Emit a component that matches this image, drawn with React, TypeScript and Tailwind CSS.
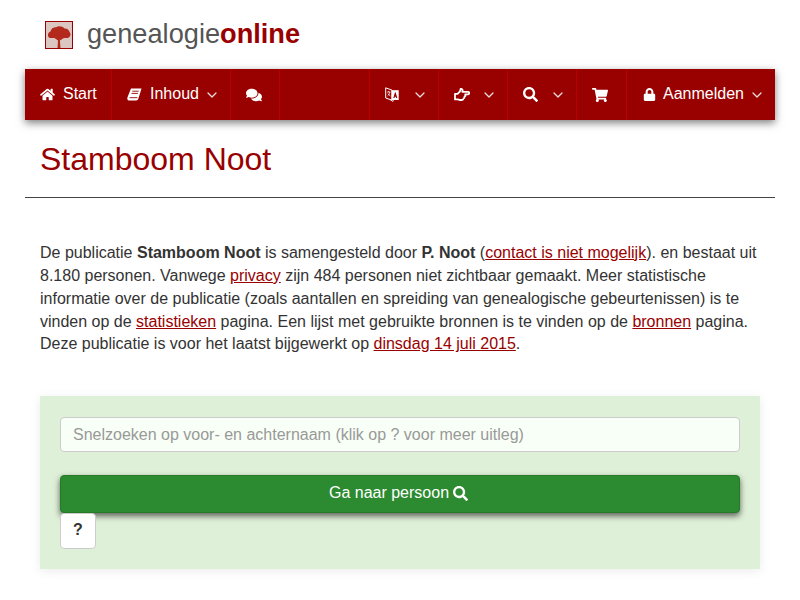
import { ReactNode } from 'react';
import { ChevronDown } from 'lucide-react';
import { FaHome, FaComments, FaSearch, FaShoppingCart, FaLock } from 'react-icons/fa';

function NavItem({ className, children, chevron }: { className: string; children: ReactNode; chevron?: boolean }) {
  return (
    <div className={`flex h-full items-center border-r border-[#b80000] pl-[15px] text-white ${className}`}>
      {children}
      {chevron && <ChevronDown size={16} strokeWidth={1.9} className="ml-auto mr-[10px] text-[#f5dede]" />}
    </div>
  );
}

function RedLink({ children }: { children: ReactNode }) {
  return <a className="text-[#990000] underline">{children}</a>;
}

// FA4 style icons, the icon packages only have the newer shapes
function BookIcon() {
  return (
    <svg viewBox="0 0 15 13" className="h-[13px] w-[15px]">
      <path d="M4 .5h10.500L11.300 10.800c-.3.9-.9 1.700-2.100 1.700H2.300C.7 12.500-.1 11 .5 9.300z" fill="white" />
      <path d="M5.300 3.200h6.400M4.500 5.400h6.400M2.600 9.700h7.800" stroke="#990000" strokeWidth="0.9" fill="none" />
    </svg>
  );
}

function LanguageIcon() {
  return (
    <svg viewBox="0 0 14 15" className="h-[15px] w-[14px]">
      <path d="M.7.8l6.300 2.400v10L.7 11z" fill="#990000" stroke="white" strokeWidth="1" />
      <path d="M6.500 3.200h7.200v9.800H6.500z" fill="white" />
      <path d="M8.300 11l1.700-5.800h.6L12.300 11h-1.200l-.3-1.300H9.800L9.500 11z" fill="#990000" />
      <path d="M2 5h3.500M3.700 4v1M2.500 9C4 8 4.500 6.500 4.800 5M3 6.500c.5 1 1.300 2 2.500 2.500" stroke="white" strokeWidth="0.7" fill="none" />
      <path d="M5 12.500l3 2 .3-1.500" stroke="white" strokeWidth="0.8" fill="none" />
    </svg>
  );
}

function HandIcon() {
  return (
    <svg viewBox="0 0 16 13" className="h-[13px] w-[16px]">
      <path
        d="M1 5.800h2.600L6 3.300 6.700.8c1.700 0 2.300 1.500 1.600 3h5.700c1.600 0 1.600 2.600 0 2.600h-2.800c.4 1 0 2-.7 2.300.1 1-.4 1.600-1 1.800-.1 1-.8 1.500-1.800 1.500H6c-1 0-1.500-.6-2.400-.6H1z"
        fill="none"
        stroke="white"
        strokeWidth="1.800"
        strokeLinejoin="round"
      />
    </svg>
  );
}

export default function App() {
  return (
    <div className="h-[600px] overflow-hidden bg-white font-['Liberation_Sans',Arial,sans-serif] text-[16px] leading-[22.85px] text-[#333333]">
      <div className="mx-auto w-[750px]">
        {/* Logo */}
        <div className="flex h-[69px] items-center pl-[20px]">
          <div className="flex h-[28px] w-[28px] items-end justify-center border border-[#990000] bg-[#dcc6c2]">
            <svg viewBox="0 0 26 26" className="h-[26px] w-[26px]">
              <path
                d="M11.500 26h3l-.6-7.500 4-2.500h3.600c3-.6 4-4 2-6-.6-2.800-3-4-5-3.500C16.500 4 12.500 3.300 10 5.300 6.500 5.300 5 7.500 4.500 9.500 1.500 10.500 1 15 4 16h4.500l3.500 2.500z"
                fill="#b32a1c"
              />
            </svg>
          </div>
          <div className="ml-[14px] pb-[2px] text-[27.2px] leading-none text-[#555555]">
            genealogie<span className="font-bold text-[#990000]">online</span>
          </div>
        </div>

        {/* Nav */}
        <nav className="flex h-[51px] items-center bg-[#990000] shadow-[0_3px_8px_rgba(0,0,0,0.5)]">
          <NavItem className="w-[87px]">
            <FaHome size={15} />
            <span className="ml-[8px]">Start</span>
          </NavItem>
          <NavItem className="w-[119px]" chevron>
            <BookIcon />
            <span className="ml-[8px]">Inhoud</span>
          </NavItem>
          <NavItem className="w-[49px]">
            <FaComments size={16} />
          </NavItem>
          <div className="h-full w-[90px] border-r border-[#b80000]" />
          <NavItem className="w-[69px]" chevron>
            <LanguageIcon />
          </NavItem>
          <NavItem className="w-[69px]" chevron>
            <HandIcon />
          </NavItem>
          <NavItem className="w-[69px]" chevron>
            <FaSearch size={15} />
          </NavItem>
          <NavItem className="w-[50px]">
            <FaShoppingCart size={16} />
          </NavItem>
          <NavItem className="flex-1 border-r-0" chevron>
            <FaLock size={13} className="ml-[1px]" />
            <span className="ml-[7px]">Aanmelden</span>
          </NavItem>
        </nav>

        {/* Title */}
        <div className="h-[78px] border-b border-[#444444] px-[15px]">
          <h1 className="pt-[21px] text-[32px] leading-[36px] text-[#990000]">Stamboom Noot</h1>
        </div>

        {/* Intro */}
        <p className="px-[15px] pt-[44px]">
          De publicatie <b>Stamboom Noot</b> is samengesteld door <b>P. Noot</b> (<RedLink>contact is niet mogelijk</RedLink>). en bestaat uit 8.180 personen. Vanwege <RedLink>privacy</RedLink> zijn 484 personen niet zichtbaar gemaakt. Meer statistische informatie over de publicatie (zoals aantallen en spreiding van genealogische gebeurtenissen) is te vinden op de <RedLink>statistieken</RedLink> pagina. Een lijst met gebruikte bronnen is te vinden op de <RedLink>bronnen</RedLink> pagina. Deze publicatie is voor het laatst bijgewerkt op <RedLink>dinsdag 14 juli 2015</RedLink>.
        </p>

        {/* Search */}
        <div className="mx-[15px] mt-[40px] h-[173px] bg-[#dff0d8] px-[20px] pt-[21px] shadow-[0_2px_10px_rgba(0,0,0,0.08)]">
          <input
            placeholder="Snelzoeken op voor- en achternaam (klik op ? voor meer uitleg)"
            className="h-[35px] w-full rounded-[4px] border border-[#cccccc] bg-[#f8fff6] px-[12px] text-[16px] placeholder:text-[#999999]"
          />
          <button className="mt-[23px] flex h-[38px] w-full items-center justify-center rounded-[4px] border border-[#267a26] bg-[#2c8a30] pr-[3px] pb-[2px] text-white shadow-[0_3px_6px_rgba(0,0,0,0.6)]">
            Ga naar persoon
            <FaSearch size={15} className="ml-[4px]" />
          </button>
          <button className="block h-[36px] w-[36px] rounded-[4px] border border-[#cccccc] bg-white pb-[2px] font-bold text-[#333333]">?</button>
        </div>
      </div>
    </div>
  );
}
